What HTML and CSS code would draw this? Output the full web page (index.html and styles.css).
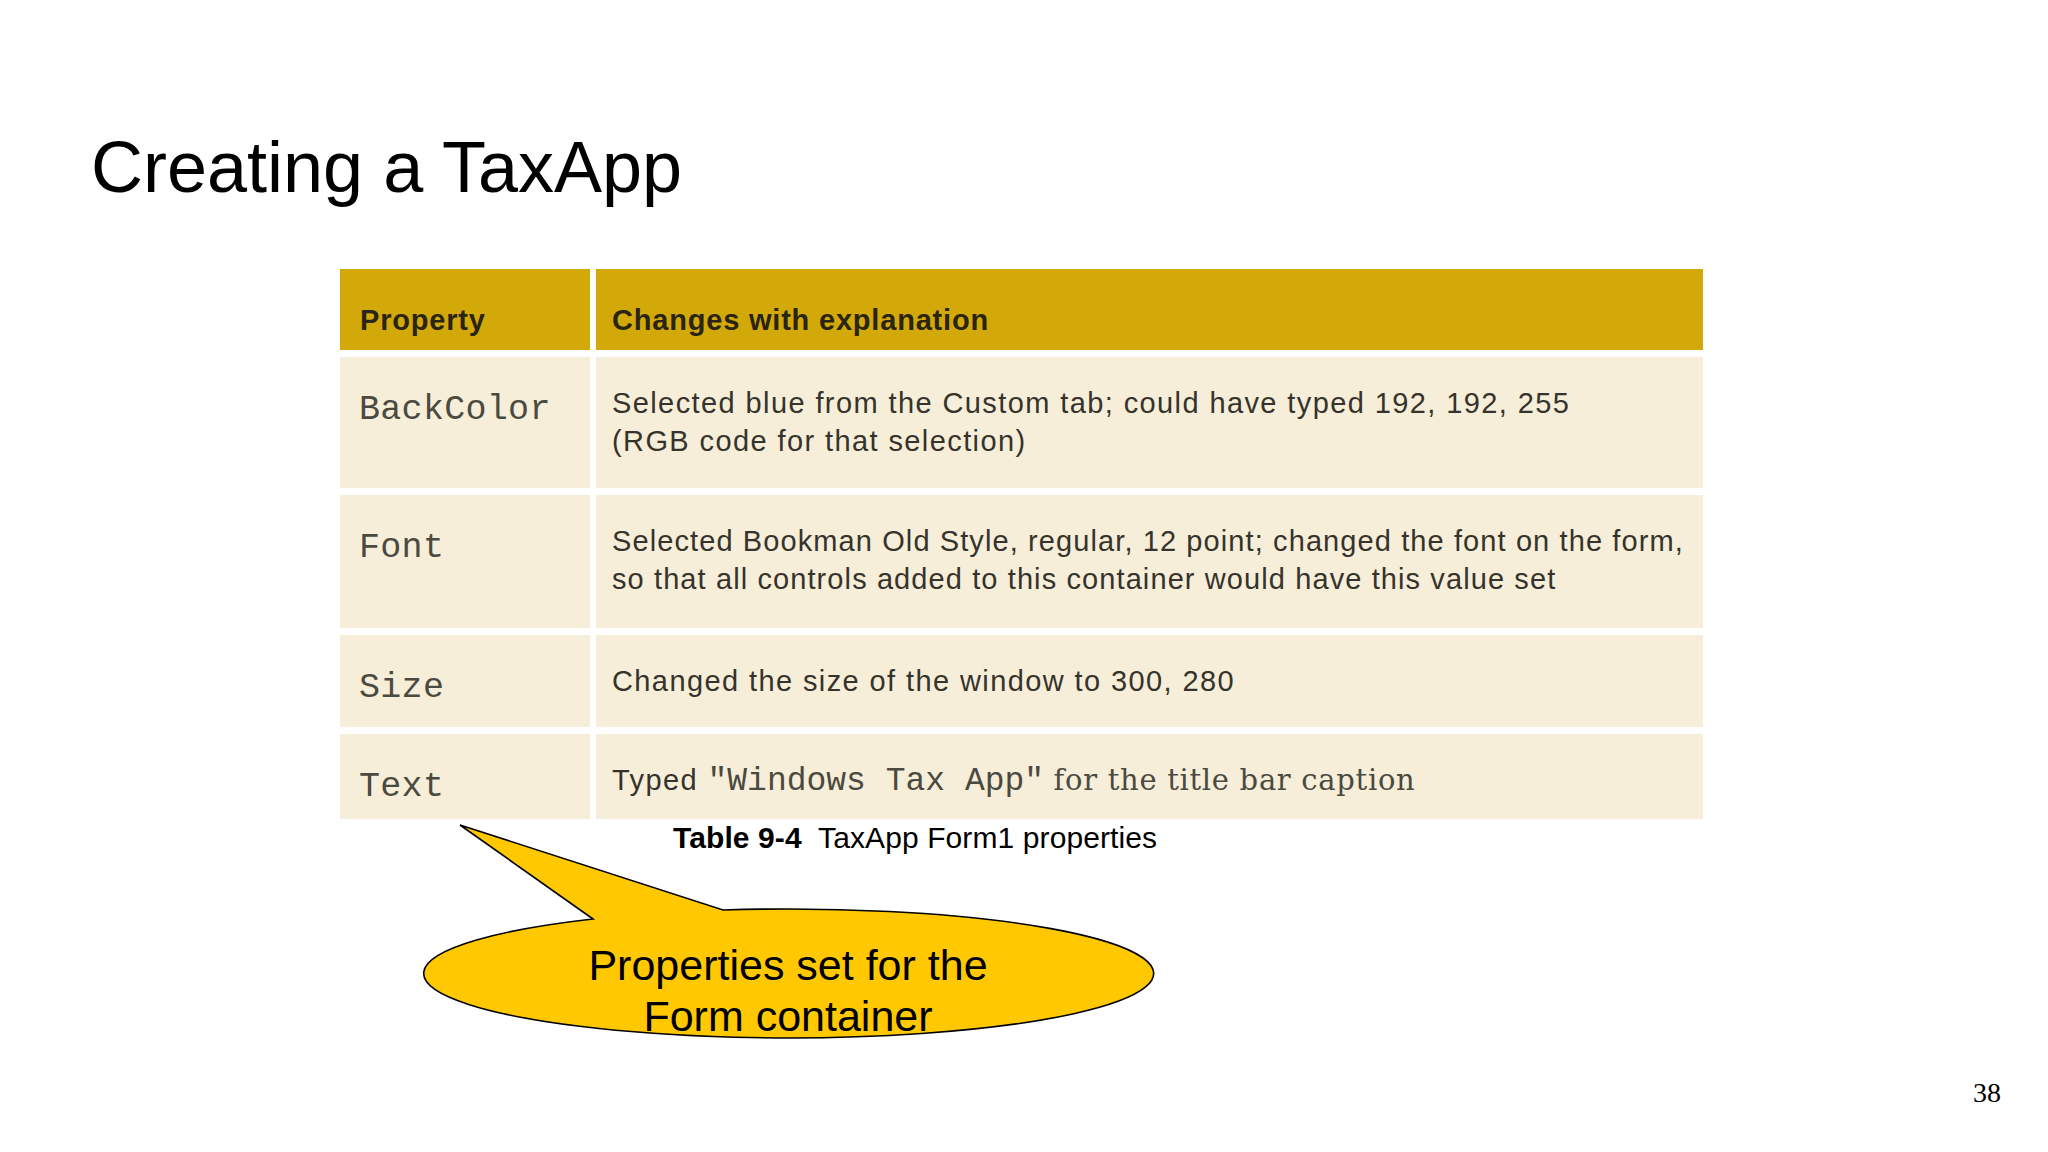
FILE: index.html
```html
<!DOCTYPE html>
<html>
<head>
<meta charset="utf-8">
<title>Creating a TaxApp</title>
<link rel="stylesheet" href="styles.css">
</head>
<body>
<div class="slide">
  <h1 class="title">Creating a TaxApp</h1>
  <div class="props">
    <div class="cell head">Property</div>
    <div class="cell head">Changes with explanation</div>

    <div class="cell prop">BackColor</div>
    <div class="cell desc">Selected blue from the Custom tab; could have typed 192, 192, 255<br>(RGB code for that selection)</div>

    <div class="cell prop">Font</div>
    <div class="cell desc desc-tight">Selected Bookman Old Style, regular, 12 point; changed the font on the form,<br>so that all controls added to this container would have this value set</div>

    <div class="cell prop">Size</div>
    <div class="cell desc">Changed the size of the window to 300, 280</div>

    <div class="cell prop">Text</div>
    <div class="cell desc">Typed <span class="code">"Windows Tax App"</span> <span class="serif">for the title bar caption</span></div>
  </div>
  <div class="caption"><b>Table 9-4</b>&nbsp; TaxApp Form1 properties</div>

  <div class="callout">
    <svg class="bubble" width="740" height="225" viewBox="0 0 740 225">
      <path d="M173 99 L40 5 L303 90 A365 64.5 0 1 1 173 99 Z" fill="#FFC800" stroke="#000" stroke-width="1.6" stroke-linejoin="miter"/>
    </svg>
    <div class="bubble-text">Properties set for the<br>Form container</div>
  </div>

  <div class="page-num">38</div>
</div>
</body>
</html>
```

FILE: styles.css
```css
html, body {
  margin: 0;
  padding: 0;
  background: #ffffff;
}

.slide {
  position: relative;
  width: 2048px;
  height: 1152px;
  overflow: hidden;
  background: #ffffff;
  font-family: "Liberation Sans", Arial, sans-serif;
  color: #000;
}

.title {
  margin: 0;
  padding: 131px 0 0 91px;
  font-family: "Liberation Sans", Arial, sans-serif;
  font-weight: normal;
  font-size: 72px;
  line-height: 72px;
  color: #000;
}

.props {
  display: grid;
  grid-template-columns: 250px 1107px;
  grid-template-rows: 81px 131px 133px 92px 85px;
  column-gap: 6px;
  row-gap: 7px;
  margin: 66px 0 0 340px;
  width: 1363px;
}

.cell {
  background: #F6EED9;
  box-sizing: border-box;
}

.head {
  background: #D3A909;
  padding: 32px 0 0 20px;
  font-family: "Liberation Sans", Arial, sans-serif;
  font-weight: bold;
  font-size: 29px;
  line-height: 38px;
  letter-spacing: 0.8px;
  color: #2a2412;
}

.head + .head {
  padding-left: 16px;
}

.prop {
  padding: 33px 0 0 19px;
  font-family: "Liberation Mono", "Courier New", monospace;
  font-size: 35px;
  line-height: 40px;
  letter-spacing: 0.3px;
  color: #4b4a40;
}

.desc {
  padding: 27px 0 0 16px;
  font-family: "Liberation Sans", Arial, sans-serif;
  font-size: 29px;
  line-height: 38px;
  letter-spacing: 1.4px;
  white-space: nowrap;
  color: #35332b;
}

.desc-tight {
  letter-spacing: 1.1px;
}

.code {
  font-family: "Liberation Mono", "Courier New", monospace;
  font-size: 33px;
  letter-spacing: 0;
  color: #4b4a40;
}

.serif {
  font-family: "DejaVu Serif", "Liberation Serif", serif;
  font-size: 29px;
  letter-spacing: 0.7px;
  color: #4b4a40;
}

.caption {
  margin: 2px 0 0 673px;
  font-family: "Liberation Sans", Arial, sans-serif;
  font-size: 30px;
  line-height: 34px;
  letter-spacing: 0.1px;
  color: #000;
  white-space: pre;
}

.caption b {
  font-weight: bold;
}

.callout {
  position: absolute;
  left: 420px;
  top: 820px;
  width: 740px;
  height: 225px;
}

.bubble {
  position: absolute;
  left: 0;
  top: 0;
  display: block;
}

.bubble-text {
  position: absolute;
  left: 0;
  top: 120px;
  width: 736px;
  text-align: center;
  font-family: "Liberation Sans", Arial, sans-serif;
  font-size: 43px;
  line-height: 51px;
  color: #000;
}

.page-num {
  position: absolute;
  right: 47px;
  top: 1077px;
  font-family: "Liberation Serif", "Times New Roman", serif;
  font-size: 28px;
  line-height: 32px;
  color: #000;
}
```
